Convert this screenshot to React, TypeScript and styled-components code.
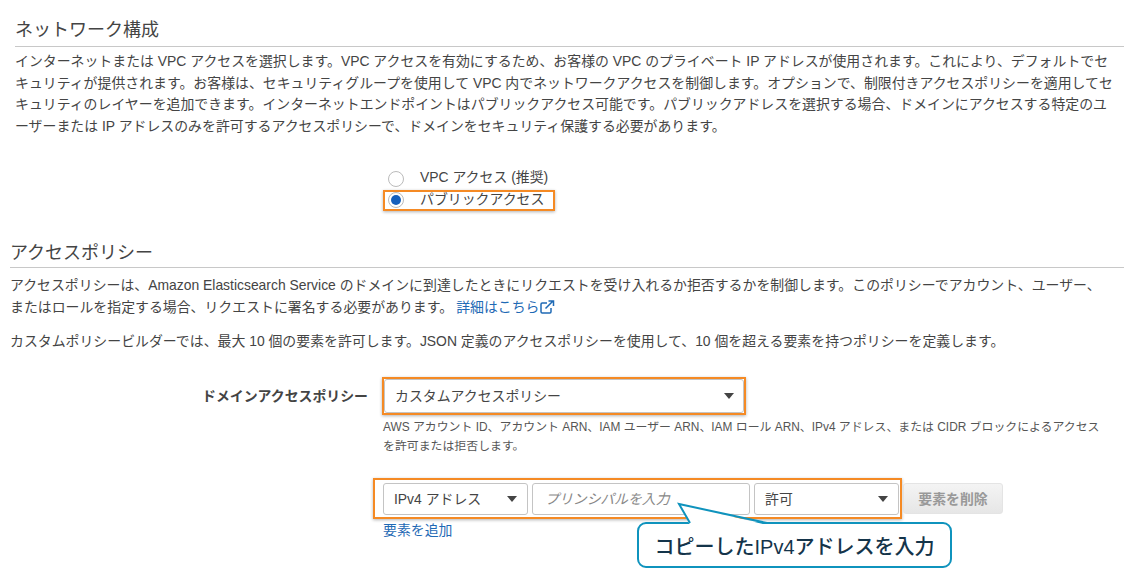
import React from "react";
import styled, { createGlobalStyle } from "styled-components";

const FONT = `"Liberation Sans", "Noto Sans CJK JP", sans-serif`;

const GlobalStyle = createGlobalStyle`
  html, body { margin: 0; padding: 0; background: #fff; }
  body { font-family: ${FONT}; color: #444; width: 1142px; height: 579px; overflow: hidden; }
`;

const Page = styled.div`
  display: flex;
  flex-direction: column;
  padding: 18px 18px 0 0;
`;

const Section = styled.section<{ $inset: number }>`
  padding-left: ${(p) => p.$inset}px;
`;

const Heading = styled.h2<{ $top?: number; $pad: number }>`
  margin: ${(p) => p.$top ?? 0}px 0 0;
  font-size: 18px;
  line-height: 24px;
  font-weight: 400;
  color: #444;
  padding-bottom: ${(p) => p.$pad}px;
  border-bottom: 1px solid #c8c8c8;
`;

const Para = styled.p<{ $top: number }>`
  margin: ${(p) => p.$top}px 0 0;
  font-size: 13.9px;
  line-height: 21.5px;
  color: #444;
  white-space: nowrap;
`;

const RadioGroup = styled.div`
  display: flex;
  flex-direction: column;
  align-items: flex-start;
  margin: 30.5px 0 0 368px;
`;

const Highlight = styled.div`
  width: fit-content;
  border: 2px solid #f58a24;
  box-shadow: 0 1px 3px rgba(0, 0, 0, 0.3);
`;

const RadioRow = styled.label<{ $h: number; $left: number }>`
  display: flex;
  align-items: center;
  height: ${(p) => p.$h}px;
  padding: 0 9px 0 ${(p) => p.$left}px;
  font-size: 13.9px;
  line-height: 14px;
  color: #444;
`;

const RadioText = styled.span`
  padding-bottom: 3px;
`;

const RadioDot = styled.span<{ $on?: boolean }>`
  box-sizing: border-box;
  width: 16px;
  height: 16px;
  margin-right: 16px;
  border-radius: 50%;
  border: 1px solid #bbb;
  background: #fff;
  display: flex;
  align-items: center;
  justify-content: center;
  &::after {
    content: "";
    width: 10px;
    height: 10px;
    border-radius: 50%;
    background: ${(p) => (p.$on ? "#1560bd" : "transparent")};
  }
`;

const DocLink = styled.a`
  margin-left: 3px;
  color: #1f6ab5;
  text-decoration: none;
  svg {
    vertical-align: -2px;
    margin-left: 1px;
  }
`;

const FieldRow = styled.div`
  display: flex;
  align-items: flex-start;
  margin-top: 25px;
`;

const FieldLabel = styled.div`
  width: 358px;
  text-align: right;
  font-size: 13.9px;
  font-weight: 700;
  line-height: 38px;
  color: #444;
  flex-shrink: 0;
`;

const FieldBody = styled.div`
  margin-left: 14px;
`;

const WideSelect = styled.div`
  box-sizing: border-box;
  width: 360px;
  height: 34px;
  display: flex;
  align-items: center;
  justify-content: space-between;
  padding: 0 9px 2px 10px;
  background: #fff;
  border: 1px solid #c4c4c4;
  border-radius: 3px;
  font-size: 13.9px;
  color: #444;
`;

const Caret = styled.span`
  width: 0;
  height: 0;
  margin-top: 2px;
  border-left: 5.5px solid transparent;
  border-right: 5.5px solid transparent;
  border-top: 6px solid #444;
`;

const Hint = styled.div`
  margin: 3px 0 0 1px;
  font-size: 11.9px;
  line-height: 19px;
  color: #555;
  white-space: nowrap;
`;

const RuleRow = styled.div`
  display: flex;
  align-items: center;
  margin: 22px 0 0 -9px;
  position: relative;
`;

const RuleBox = styled(Highlight)`
  display: flex;
  gap: 4px;
  padding: 3px 1px 2px 8px;
`;

const SmallSelect = styled.div`
  box-sizing: border-box;
  width: 145px;
  height: 32px;
  display: flex;
  align-items: center;
  justify-content: space-between;
  padding: 0 10px 2px 10px;
  background: #fff;
  border: 1px solid #c4c4c4;
  border-radius: 3px;
  font-size: 13.9px;
  color: #444;
`;

const TextInput = styled.div`
  box-sizing: border-box;
  width: 218px;
  height: 32px;
  display: flex;
  align-items: center;
  padding: 0 12px 2px;
  background: #fff;
  border: 1px solid #c4c4c4;
  border-radius: 3px;
  font-size: 13.9px;
  font-style: italic;
  color: #888;
`;

const RemoveButton = styled.button`
  box-sizing: border-box;
  width: 100px;
  height: 31px;
  margin-left: 1px;
  padding: 0 0 2px;
  border: 1px solid #e4e4e4;
  border-radius: 3px;
  background: linear-gradient(#f4f4f4, #e6e6e6);
  font-family: ${FONT};
  font-size: 13.9px;
  font-weight: 700;
  color: #999;
`;

const AddLink = styled.a`
  display: block;
  margin: 2px 0 0 1px;
  font-size: 13.9px;
  line-height: 18px;
  color: #1f6ab5;
`;

const Callout = styled.div`
  position: absolute;
  left: 264px;
  top: 44px;
  box-sizing: border-box;
  width: 315px;
  height: 46px;
  display: flex;
  align-items: center;
  justify-content: center;
  background: #fff;
  border: 2px solid #0f93bd;
  border-radius: 9px;
  font-size: 20px;
  font-weight: 500;
  color: #14344a;
`;

const CalloutTail = styled.svg`
  position: absolute;
  left: 0;
  top: 0;
  overflow: visible;
`;

const ExternalIcon = () => (
  <svg width="15" height="14" viewBox="0 0 15 14" fill="none" stroke="#1f6ab5" strokeWidth="1.5">
    <path d="M7 3H2.2A1.2 1.2 0 0 0 1 4.2v7.6A1.2 1.2 0 0 0 2.2 13h7.6a1.2 1.2 0 0 0 1.2-1.2V8" />
    <path d="M5.5 8.5 13 1M8.5 1H13.5V6" />
  </svg>
);

export default function App() {
  return (
    <>
      <GlobalStyle />
      <Page>
        <Section $inset={15}>
          <Heading $pad={4}>ネットワーク構成</Heading>
          <Para $top={4}>
            インターネットまたは VPC アクセスを選択します。VPC アクセスを有効にするため、お客様の VPC のプライベート IP アドレスが使用されます。これにより、デフォルトでセ
            <br />
            キュリティが提供されます。お客様は、セキュリティグループを使用して VPC 内でネットワークアクセスを制御します。オプションで、制限付きアクセスポリシーを適用してセ
            <br />
            キュリティのレイヤーを追加できます。インターネットエンドポイントはパブリックアクセス可能です。パブリックアドレスを選択する場合、ドメインにアクセスする特定のユ
            <br />
            ーザーまたは IP アドレスのみを許可するアクセスポリシーで、ドメインをセキュリティ保護する必要があります。
          </Para>
          <RadioGroup>
            <RadioRow $h={22} $left={5}>
              <RadioDot />
              <RadioText>VPC アクセス (推奨)</RadioText>
            </RadioRow>
            <Highlight>
              <RadioRow $h={17.5} $left={3}>
                <RadioDot $on />
                <RadioText>パブリックアクセス</RadioText>
              </RadioRow>
            </Highlight>
          </RadioGroup>
        </Section>
        <Section $inset={10}>
          <Heading $top={30} $pad={2}>アクセスポリシー</Heading>
          <Para $top={7}>
            アクセスポリシーは、Amazon Elasticsearch Service のドメインに到達したときにリクエストを受け入れるか拒否するかを制御します。このポリシーでアカウント、ユーザー、
            <br />
            またはロールを指定する場合、リクエストに署名する必要があります。
            <DocLink>
              詳細はこちら
              <ExternalIcon />
            </DocLink>
          </Para>
          <Para $top={12.7}>
            カスタムポリシービルダーでは、最大 10 個の要素を許可します。JSON 定義のアクセスポリシーを使用して、10 個を超える要素を持つポリシーを定義します。
          </Para>
          <FieldRow>
            <FieldLabel>ドメインアクセスポリシー</FieldLabel>
            <FieldBody>
              <Highlight>
                <WideSelect>
                  カスタムアクセスポリシー
                  <Caret />
                </WideSelect>
              </Highlight>
              <Hint>
                AWS アカウント ID、アカウント ARN、IAM ユーザー ARN、IAM ロール ARN、IPv4 アドレス、または CIDR ブロックによるアクセス
                <br />
                を許可または拒否します。
              </Hint>
              <RuleRow>
                <RuleBox>
                  <SmallSelect>
                    IPv4 アドレス
                    <Caret />
                  </SmallSelect>
                  <TextInput>プリンシパルを入力</TextInput>
                  <SmallSelect>
                    許可
                    <Caret />
                  </SmallSelect>
                </RuleBox>
                <RemoveButton>要素を削除</RemoveButton>
                <Callout>
                  <CalloutTail width="1" height="1">
                    <path d="M51 1 L40 -20 L128 1 Z" fill="#fff" />
                    <path d="M51 -1 L40 -20 L128 -1" fill="none" stroke="#0f93bd" strokeWidth="2" />
                  </CalloutTail>
                  コピーしたIPv4アドレスを入力
                </Callout>
              </RuleRow>
              <AddLink>要素を追加</AddLink>
            </FieldBody>
          </FieldRow>
        </Section>
      </Page>
    </>
  );
}
